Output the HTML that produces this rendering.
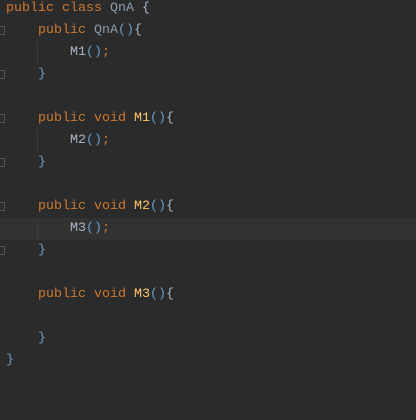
<!DOCTYPE html><html><head><style>
body{margin:0;width:416px;height:420px;background:#2b2b2b;overflow:hidden;position:relative}
.l{position:absolute;left:6px;height:22px;line-height:22px;font-family:"Liberation Mono",monospace;font-size:13.33px;color:#a9b7c6;white-space:pre}
.k{color:#cc7832}.m{color:#ffc66d}.c{color:#8a9bab}.p{color:#6c9fc9}
.hl{position:absolute;left:0;top:218px;width:416px;height:22px;background:#323232}
.g{position:absolute;left:37px;width:1px;background:#3b3b3b}
.f{position:absolute;left:0;width:4px;height:7px;border:1px solid #555;border-left:none;background:#2b2b2b}
</style></head><body>
<div class="hl"></div>
<div class="g" style="top:42px;height:22px"></div>
<div class="g" style="top:130px;height:22px"></div>
<div class="g" style="top:218px;height:22px"></div>
<div class="f" style="top:26px"></div><div class="f" style="top:70px"></div>
<div class="f" style="top:114px"></div><div class="f" style="top:158px"></div>
<div class="f" style="top:202px"></div><div class="f" style="top:246px"></div>
<div class="l" style="top:-2px"><span class="k">public class </span><span class="c">QnA</span> {</div>
<div class="l" style="top:20px">    <span class="k">public </span><span class="c">QnA</span><span class="p">()</span>{</div>
<div class="l" style="top:42px">        M1<span class="p">()</span><span class="k">;</span></div>
<div class="l" style="top:64px">    <span class="p">}</span></div>
<div class="l" style="top:108px">    <span class="k">public void </span><span class="m">M1</span><span class="p">()</span>{</div>
<div class="l" style="top:130px">        M2<span class="p">()</span><span class="k">;</span></div>
<div class="l" style="top:152px">    <span class="p">}</span></div>
<div class="l" style="top:196px">    <span class="k">public void </span><span class="m">M2</span><span class="p">()</span>{</div>
<div class="l" style="top:218px">        M3<span class="p">()</span><span class="k">;</span></div>
<div class="l" style="top:240px">    <span class="p">}</span></div>
<div class="l" style="top:284px">    <span class="k">public void </span><span class="m">M3</span><span class="p">()</span>{</div>
<div class="l" style="top:328px">    <span class="p">}</span></div>
<div class="l" style="top:350px"><span class="p">}</span></div>
</body></html>
